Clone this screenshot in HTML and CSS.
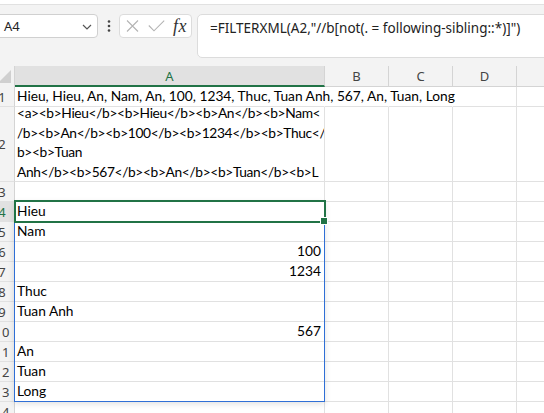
FILE: index.html
```html
<!DOCTYPE html>
<html>
<head>
<meta charset="utf-8">
<link rel="stylesheet" href="styles.css">
</head>
<body>
<div class="topstrip"></div>
<div class="fbar">
  <div class="namebox">
    <span class="nb-text">A4</span>
    <svg class="chev" width="10" height="6" viewBox="0 0 10 6"><path d="M1 1 L5 5 L9 1" fill="none" stroke="#555" stroke-width="1.2"/></svg>
  </div>
  <div class="dots">
    <svg width="4" height="12" viewBox="0 0 4 12"><circle cx="2" cy="1.5" r="1.3" fill="#444"/><circle cx="2" cy="6" r="1.3" fill="#444"/><circle cx="2" cy="10.5" r="1.3" fill="#444"/></svg>
  </div>
  <div class="fbtns">
    <svg class="ic-x" width="13" height="12" viewBox="0 0 13 12"><path d="M1 0.5 L12 11.5 M12 0.5 L1 11.5" stroke="#b4b4b4" stroke-width="1.1" fill="none"/></svg>
    <svg class="ic-ok" width="17" height="12" viewBox="0 0 17 12"><path d="M0.8 5.5 L6 10.8 L16.2 0.6" stroke="#b4b4b4" stroke-width="1.1" fill="none"/></svg>
    <span class="fx">fx</span>
  </div>
  <div class="finput">=FILTERXML(A2,"//b[not(. = following-sibling::*)]")</div>
</div>
<div class="sheet">
  <div class="corner"><svg width="13" height="13" viewBox="0 0 13 13"><polygon points="13,0 13,13 0,13" fill="#d0d0d0"/></svg></div>
  <div class="ch ch-sel">A</div>
  <div class="ch">B</div>
  <div class="ch">C</div>
  <div class="ch">D</div>
  <div class="ch"></div>

  <div class="rh">1</div>
  <div class="c nr"><span class="over">Hieu, Hieu, An, Nam, An, 100, 1234, Thuc, Tuan Anh, 567, An, Tuan, Long</span></div>
  <div class="c nr"></div>
  <div class="c nr"></div>
  <div class="c"></div>
  <div class="c"></div>

  <div class="rh">2</div>
  <div class="c wrap"><div>&lt;a&gt;&lt;b&gt;Hieu&lt;/b&gt;&lt;b&gt;Hieu&lt;/b&gt;&lt;b&gt;An&lt;/b&gt;&lt;b&gt;Nam&lt;</div><div>/b&gt;&lt;b&gt;An&lt;/b&gt;&lt;b&gt;100&lt;/b&gt;&lt;b&gt;1234&lt;/b&gt;&lt;b&gt;Thuc&lt;/</div><div>b&gt;&lt;b&gt;Tuan</div><div>Anh&lt;/b&gt;&lt;b&gt;567&lt;/b&gt;&lt;b&gt;An&lt;/b&gt;&lt;b&gt;Tuan&lt;/b&gt;&lt;b&gt;L</div></div>
  <div class="c"></div><div class="c"></div><div class="c"></div><div class="c"></div>

  <div class="rh">3</div>
  <div class="c"></div><div class="c"></div><div class="c"></div><div class="c"></div><div class="c"></div>

  <div class="rh rh-sel">4</div>
  <div class="c a4">Hieu<span class="spill"></span><span class="selbox"><span class="handle"></span></span></div><div class="c"></div><div class="c"></div><div class="c"></div><div class="c"></div>

  <div class="rh">5</div>
  <div class="c">Nam</div><div class="c"></div><div class="c"></div><div class="c"></div><div class="c"></div>

  <div class="rh">6</div>
  <div class="c num">100</div><div class="c"></div><div class="c"></div><div class="c"></div><div class="c"></div>

  <div class="rh">7</div>
  <div class="c num">1234</div><div class="c"></div><div class="c"></div><div class="c"></div><div class="c"></div>

  <div class="rh">8</div>
  <div class="c">Thuc</div><div class="c"></div><div class="c"></div><div class="c"></div><div class="c"></div>

  <div class="rh">9</div>
  <div class="c">Tuan Anh</div><div class="c"></div><div class="c"></div><div class="c"></div><div class="c"></div>

  <div class="rh">10</div>
  <div class="c num">567</div><div class="c"></div><div class="c"></div><div class="c"></div><div class="c"></div>

  <div class="rh">11</div>
  <div class="c">An</div><div class="c"></div><div class="c"></div><div class="c"></div><div class="c"></div>

  <div class="rh">12</div>
  <div class="c">Tuan</div><div class="c"></div><div class="c"></div><div class="c"></div><div class="c"></div>

  <div class="rh">13</div>
  <div class="c">Long</div><div class="c"></div><div class="c"></div><div class="c"></div><div class="c"></div>

  <div class="rh">14</div>
  <div class="c"></div><div class="c"></div><div class="c"></div><div class="c"></div><div class="c"></div>
</div>
</body>
</html>
```

FILE: styles.css
```css
html, body {
  margin: 0;
  padding: 0;
  width: 544px;
  height: 413px;
  overflow: hidden;
  background: #f3f3f3;
}
body {
  font-family: "Noto Sans", "Open Sans", sans-serif;
}
.topstrip {
  height: 4px;
  background: #ffffff;
  border-bottom: 1px solid #e1e1e1;
}
.fbar {
  display: flex;
  align-items: flex-start;
  height: 61px;
  box-sizing: border-box;
  padding-top: 9px;
  margin-left: -6px;
  margin-right: -10px;
}
.namebox {
  width: 104px;
  height: 24px;
  box-sizing: border-box;
  background: #fff;
  border: 1px solid #d0d0d0;
  border-radius: 4px;
  display: flex;
  align-items: center;
  justify-content: space-between;
  padding: 0 5px 0 9px;
  font-size: 13px;
  color: #222;
}
.chev { display: block; margin-top: 1px; }
.dots {
  width: 21px;
  height: 24px;
  display: flex;
  align-items: center;
  justify-content: center;
}
.dots svg { display: block; }
.fbtns {
  width: 73px;
  height: 24px;
  box-sizing: border-box;
  background: #fff;
  border: 1px solid #dcdcdc;
  border-radius: 4px;
  display: flex;
  align-items: center;
  padding-left: 6px;
}
.ic-x { display: block; margin-right: 9px; }
.ic-ok { display: block; margin-right: 8px; }
.fx {
  font-family: "Liberation Serif", "DejaVu Serif", serif;
  font-style: italic;
  font-size: 18px;
  color: #333;
  line-height: 22px;
  letter-spacing: 0.5px;
}
.finput {
  flex: 1;
  margin-left: 5px;
  height: 44px;
  box-sizing: border-box;
  background: #fff;
  border: 1px solid #dcdcdc;
  border-radius: 5px;
  padding: 3px 0 0 12px;
  font-size: 13.5px;
  line-height: 20px;
  color: #222;
  white-space: nowrap;
  overflow: hidden;
}
.sheet {
  display: grid;
  grid-template-columns: 25px 310px 64px 64px 64px 64px;
  grid-template-rows: 21px 20px 75px repeat(12, 20px);
  margin-left: -10px;
  background: #fff;
  font-family: "Lato", "Noto Sans", sans-serif;
  font-size: 13.75px;
  color: #000;
}
.corner {
  background: #f3f3f3;
  border-right: 1px solid #d4d4d4;
  display: flex;
  align-items: flex-end;
  justify-content: flex-end;
  padding: 0 3px 4px 0;
}
.corner svg { display: block; }
.ch {
  background: #f3f3f3;
  border-right: 1px solid #d4d4d4;
  border-bottom: 1px solid #d4d4d4;
  display: flex;
  align-items: center;
  justify-content: center;
  font-family: "Noto Sans", sans-serif;
  font-size: 13px;
  color: #444;
}
.ch-sel {
  background: #e1e1e1;
  color: #217346;
  border-bottom: 2px solid #217346;
}
.rh {
  background: #f3f3f3;
  border-right: 1px solid #d4d4d4;
  border-bottom: 1px solid #e1e1e1;
  display: flex;
  align-items: center;
  justify-content: center;
  font-family: "Noto Sans", sans-serif;
  font-size: 13px;
  color: #444;
}
.rh-sel {
  background: #e1e1e1;
  color: #217346;
}
.c {
  border-right: 1px solid #e1e1e1;
  border-bottom: 1px solid #e1e1e1;
  display: flex;
  align-items: flex-end;
  padding: 0 3px 0 2px;
  line-height: 20px;
  white-space: nowrap;
  min-width: 0;
}
.c.nr { border-right-color: transparent; }
.over {
  position: relative;
  z-index: 1;
}
.num { justify-content: flex-end; }
.wrap {
  flex-direction: column;
  justify-content: flex-end;
  align-items: stretch;
  overflow: hidden;
  line-height: 19.5px;
  letter-spacing: -0.35px;
}
.wrap div { white-space: pre; }
.a4 { position: relative; }
.spill {
  position: absolute;
  left: -1px;
  top: -1px;
  width: 311px;
  height: 201px;
  box-sizing: border-box;
  border: 1px solid #2f6fd6;
  box-shadow: 0 2px 6px rgba(0, 0, 0, 0.12);
  pointer-events: none;
  z-index: 2;
}
.selbox {
  position: absolute;
  left: -1px;
  top: -2px;
  width: 312px;
  height: 23px;
  box-sizing: border-box;
  border: 2px solid #217346;
  z-index: 3;
}
.handle {
  position: absolute;
  right: -4px;
  bottom: -4px;
  width: 6px;
  height: 6px;
  background: #217346;
  border: 1px solid #fff;
}
```
